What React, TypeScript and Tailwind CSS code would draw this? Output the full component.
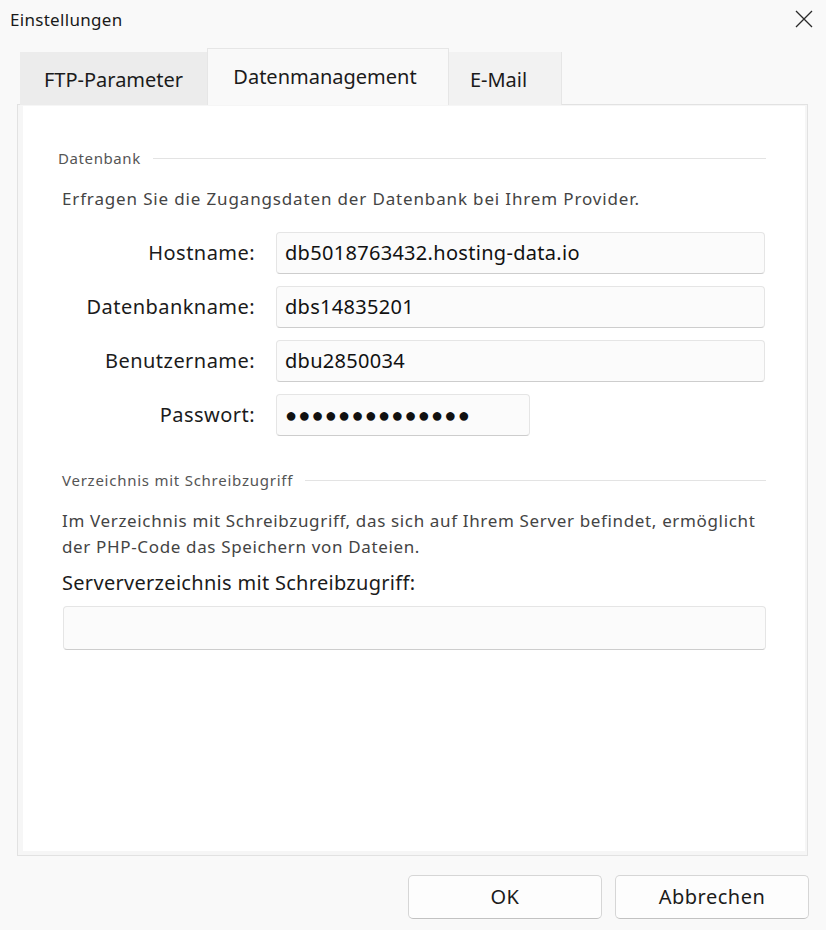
import React from 'react';

const font = "font-['Noto_Sans','Open_Sans',sans-serif]";

const Field: React.FC<{ label: string; value: string; short?: boolean; dots?: boolean }> = ({ label, value, short, dots }) => (
  <div className="flex items-center">
    <div className="w-[197px] text-right text-[20px] text-[#1b1b1b] tracking-[0.45px]">{label}</div>
    <div
      className={`ml-[21px] h-[42px] ${short ? 'w-[254px]' : 'w-[489px]'} flex items-center px-[8px] rounded-[4px] bg-[#fbfbfb] border border-[#e5e5e5] border-b-[#cdcdcd] text-[20px] text-[#111] tracking-[0.3px]`}
    >
      {dots ? <span className="text-[20px] tracking-[1.2px]">{value}</span> : value}
    </div>
  </div>
);

const SectionHeader: React.FC<{ title: string; small?: boolean }> = ({ title, small }) => (
  <div className="flex items-center h-[20px]">
    <span className={`${small ? 'text-[15px] tracking-[0.75px]' : 'text-[15px] tracking-[0.6px]'} text-[#555]`}>{title}</span>
    <div className="flex-1 ml-[12px] h-px bg-[#e3e3e3]" />
  </div>
);

const App: React.FC = () => {
  return (
    <div className={`w-[826px] h-[930px] bg-[#f9f9f9] flex flex-col ${font}`}>
      {/* title bar */}
      <div className="h-[40px] flex items-center justify-between pl-[10px] pr-[13px]">
        <span className="text-[17px] tracking-[0.3px] text-[#1a1a1a]">Einstellungen</span>
        <svg width="18" height="18" viewBox="0 0 18 18" className="mt-[-2px]">
          <path d="M1 1 L17 17 M17 1 L1 17" stroke="#2a2a2a" strokeWidth="1.3" />
        </svg>
      </div>

      {/* tabs */}
      <div className="flex items-end pl-[20px] mt-[9px] h-[56px] relative z-10">
        <div className="h-[53px] w-[187px] bg-[#ececec] flex items-center justify-center text-[20px] text-[#1b1b1b] pt-[3px]">
          FTP-Parameter
        </div>
        <div className="h-[57px] w-[242px] bg-[#f9f9f9] border border-b-0 border-[#e6e6e6] flex items-center justify-center text-[20px] text-[#1b1b1b] pr-[6px]">
          Datenmanagement
        </div>
        <div className="h-[53px] w-[113px] bg-[#f2f2f2] border-r border-[#e6e6e6] flex items-center justify-center text-[20px] text-[#1b1b1b] pt-[3px] pr-[13px]">
          E-Mail
        </div>
      </div>

      {/* panel */}
      <div className="ml-[17px] mr-[18px] h-[752px] -mt-px border border-[#e2e2e2] bg-[#f6f6f6] pt-[1px] pr-[2px] pb-[4px] pl-[5px]">
        <div className="h-full bg-white pt-[42px] pl-[35px] pr-[39px]">
          <SectionHeader title="Datenbank" />
          <p className="mt-[19px] pl-[4px] text-[17px] leading-[24px] text-[#444] tracking-[0.85px]">
            Erfragen Sie die Zugangsdaten der Datenbank bei Ihrem Provider.
          </p>
          <div className="mt-[21px] flex flex-col gap-[12px]">
            <Field label="Hostname:" value="db5018763432.hosting-data.io" />
            <Field label="Datenbankname:" value="dbs14835201" />
            <Field label="Benutzername:" value="dbu2850034" />
            <Field label="Passwort:" value="●●●●●●●●●●●●●●" short dots />
          </div>

          <div className="mt-[34px] pl-[4px]">
            <SectionHeader title="Verzeichnis mit Schreibzugriff" small />
          </div>
          <p className="mt-[18px] pl-[4px] text-[17px] leading-[26px] text-[#444] tracking-[0.65px]">
            Im Verzeichnis mit Schreibzugriff, das sich auf Ihrem Server befindet, ermöglicht
            <br />
            der PHP-Code das Speichern von Dateien.
          </p>
          <div className="mt-[10px] pl-[4px] text-[20px] leading-[26px] text-[#1b1b1b] tracking-[0.3px]">
            Serververzeichnis mit Schreibzugriff:
          </div>
          <div className="mt-[10px] ml-[5px] h-[44px] rounded-[4px] bg-[#fbfbfb] border border-[#e5e5e5] border-b-[#cdcdcd]" />
        </div>
      </div>

      {/* buttons */}
      <div className="flex justify-end gap-[13px] pr-[17px] mt-[19px]">
        <button className="w-[194px] h-[44px] rounded-[5px] bg-[#fdfdfd] border border-[#d6d6d6] border-b-[#c2c2c2] text-[20px] tracking-[0.5px] text-[#1b1b1b]">
          OK
        </button>
        <button className="w-[194px] h-[44px] rounded-[5px] bg-[#fdfdfd] border border-[#d6d6d6] border-b-[#c2c2c2] text-[20px] tracking-[0.5px] text-[#1b1b1b]">
          Abbrechen
        </button>
      </div>
    </div>
  );
};

export default App;
